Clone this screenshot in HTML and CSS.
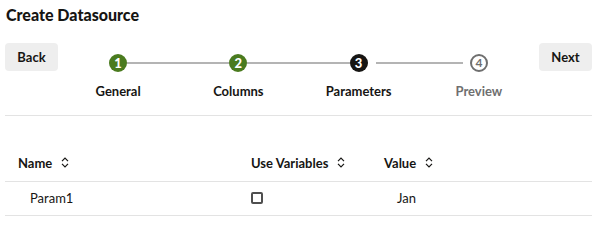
FILE: index.html
```html
<!DOCTYPE html>
<html>
<head>
<meta charset="utf-8">
<link rel="stylesheet" href="styles.css">
</head>
<body>
<div class="page">
  <h1 class="title">Create Datasource</h1>
  <div class="wizard">
    <button class="btn">Back</button>
    <div class="train">
      <div class="step done">
        <span class="seg seg-none"></span><span class="dot">1</span><span class="seg"></span>
        <span class="label">General</span>
      </div>
      <div class="step done">
        <span class="seg"></span><span class="dot">2</span><span class="seg"></span>
        <span class="label">Columns</span>
      </div>
      <div class="step current">
        <span class="seg"></span><span class="dot">3</span><span class="seg seg-gap-left"></span>
        <span class="label">Parameters</span>
      </div>
      <div class="step todo">
        <span class="seg seg-gap-right"></span><span class="dot">4</span><span class="seg seg-none"></span>
        <span class="label">Preview</span>
      </div>
    </div>
    <button class="btn">Next</button>
  </div>
  <div class="divider"></div>
  <table class="grid">
    <colgroup>
      <col class="c-name"><col class="c-use"><col class="c-value">
    </colgroup>
    <thead>
      <tr>
        <th><span class="th-in">Name<svg class="sort" viewBox="0 0 8 11" width="8" height="11"><path d="M1 4.2 L4 1.2 L7 4.2 M1 6.8 L4 9.8 L7 6.8"/></svg></span></th>
        <th><span class="th-in">Use Variables<svg class="sort" viewBox="0 0 8 11" width="8" height="11"><path d="M1 4.2 L4 1.2 L7 4.2 M1 6.8 L4 9.8 L7 6.8"/></svg></span></th>
        <th><span class="th-in">Value<svg class="sort" viewBox="0 0 8 11" width="8" height="11"><path d="M1 4.2 L4 1.2 L7 4.2 M1 6.8 L4 9.8 L7 6.8"/></svg></span></th>
      </tr>
    </thead>
    <tbody>
      <tr>
        <td class="td-name">Param1</td>
        <td class="td-use"><span class="checkbox"></span></td>
        <td class="td-value">Jan</td>
      </tr>
    </tbody>
  </table>
</div>
</body>
</html>
```

FILE: styles.css
```css
* { box-sizing: border-box; }
html, body { margin: 0; padding: 0; background: #ffffff; }
body {
  font-family: Lato, "Liberation Sans", sans-serif;
  color: #161513;
  font-size: 13px;
}
.page { padding: 5px 5px 0 5px; width: 597px; }
.title {
  margin: 0 0 0 1px;
  font-size: 16px;
  line-height: 20px;
  font-weight: 900;
}
.wizard {
  margin-top: 18px;
  display: flex;
  align-items: flex-start;
}
.btn {
  flex: 0 0 53px;
  height: 28px;
  border: none;
  border-radius: 4px;
  background: #eeeeee;
  font-family: Lato, "Liberation Sans", sans-serif;
  font-size: 13px;
  font-weight: 700;
  color: #161513;
  padding: 0;
}
.train {
  flex: 1;
  display: grid;
  grid-template-columns: repeat(4, 1fr);
  padding-top: 11px;
}
.step {
  display: grid;
  grid-template-columns: 1fr 18px 1fr;
  grid-template-rows: 18px auto;
  align-items: center;
}
.seg {
  height: 2px;
  background: #b4b4b4;
}
.seg-none { background: transparent; }
.seg-gap-left { margin-left: 8px; }
.seg-gap-right { margin-right: 7px; }
.dot {
  width: 18px;
  height: 18px;
  border-radius: 50%;
  display: flex;
  align-items: center;
  justify-content: center;
  font-size: 13px;
  font-weight: 900;
  color: #ffffff;
  line-height: 1;
}
.done .dot { background: #4a7b1f; }
.current .dot { background: #161513; }
.todo .dot {
  background: #ffffff;
  border: 2px solid #6f6f6f;
  color: #6f6f6f;
  font-weight: 700;
  font-size: 12px;
}
.label {
  grid-column: 1 / 4;
  text-align: center;
  font-weight: 700;
  font-size: 13px;
  line-height: 16px;
  margin-top: 11px;
}
.todo .label { color: #6f6f6f; }
.divider {
  margin-top: 16px;
  height: 1px;
  background: #e3e3e3;
}
.grid {
  margin-top: 29px;
  width: 587px;
  border-collapse: collapse;
  table-layout: fixed;
}
.c-name { width: 233px; }
.c-use { width: 133px; }
.grid th {
  height: 36px;
  padding: 0 0 0 13px;
  text-align: left;
  font-weight: 700;
  font-size: 13px;
  border-bottom: 1px solid #e3e3e3;
  vertical-align: middle;
}
.th-in { display: inline-flex; align-items: center; gap: 9px; }
.sort { fill: none; stroke: #161513; stroke-width: 1.2; }
.grid td {
  height: 34px;
  font-size: 13px;
  border-bottom: 1px solid #e3e3e3;
  vertical-align: middle;
}
.td-name { padding-left: 25px; }
.td-use { padding-left: 13px; }
.td-value { padding-left: 26px; }
.checkbox {
  display: block;
  width: 12px;
  height: 12px;
  border: 2px solid #4f4f4f;
  border-radius: 2px;
  background: #fff;
}
```
